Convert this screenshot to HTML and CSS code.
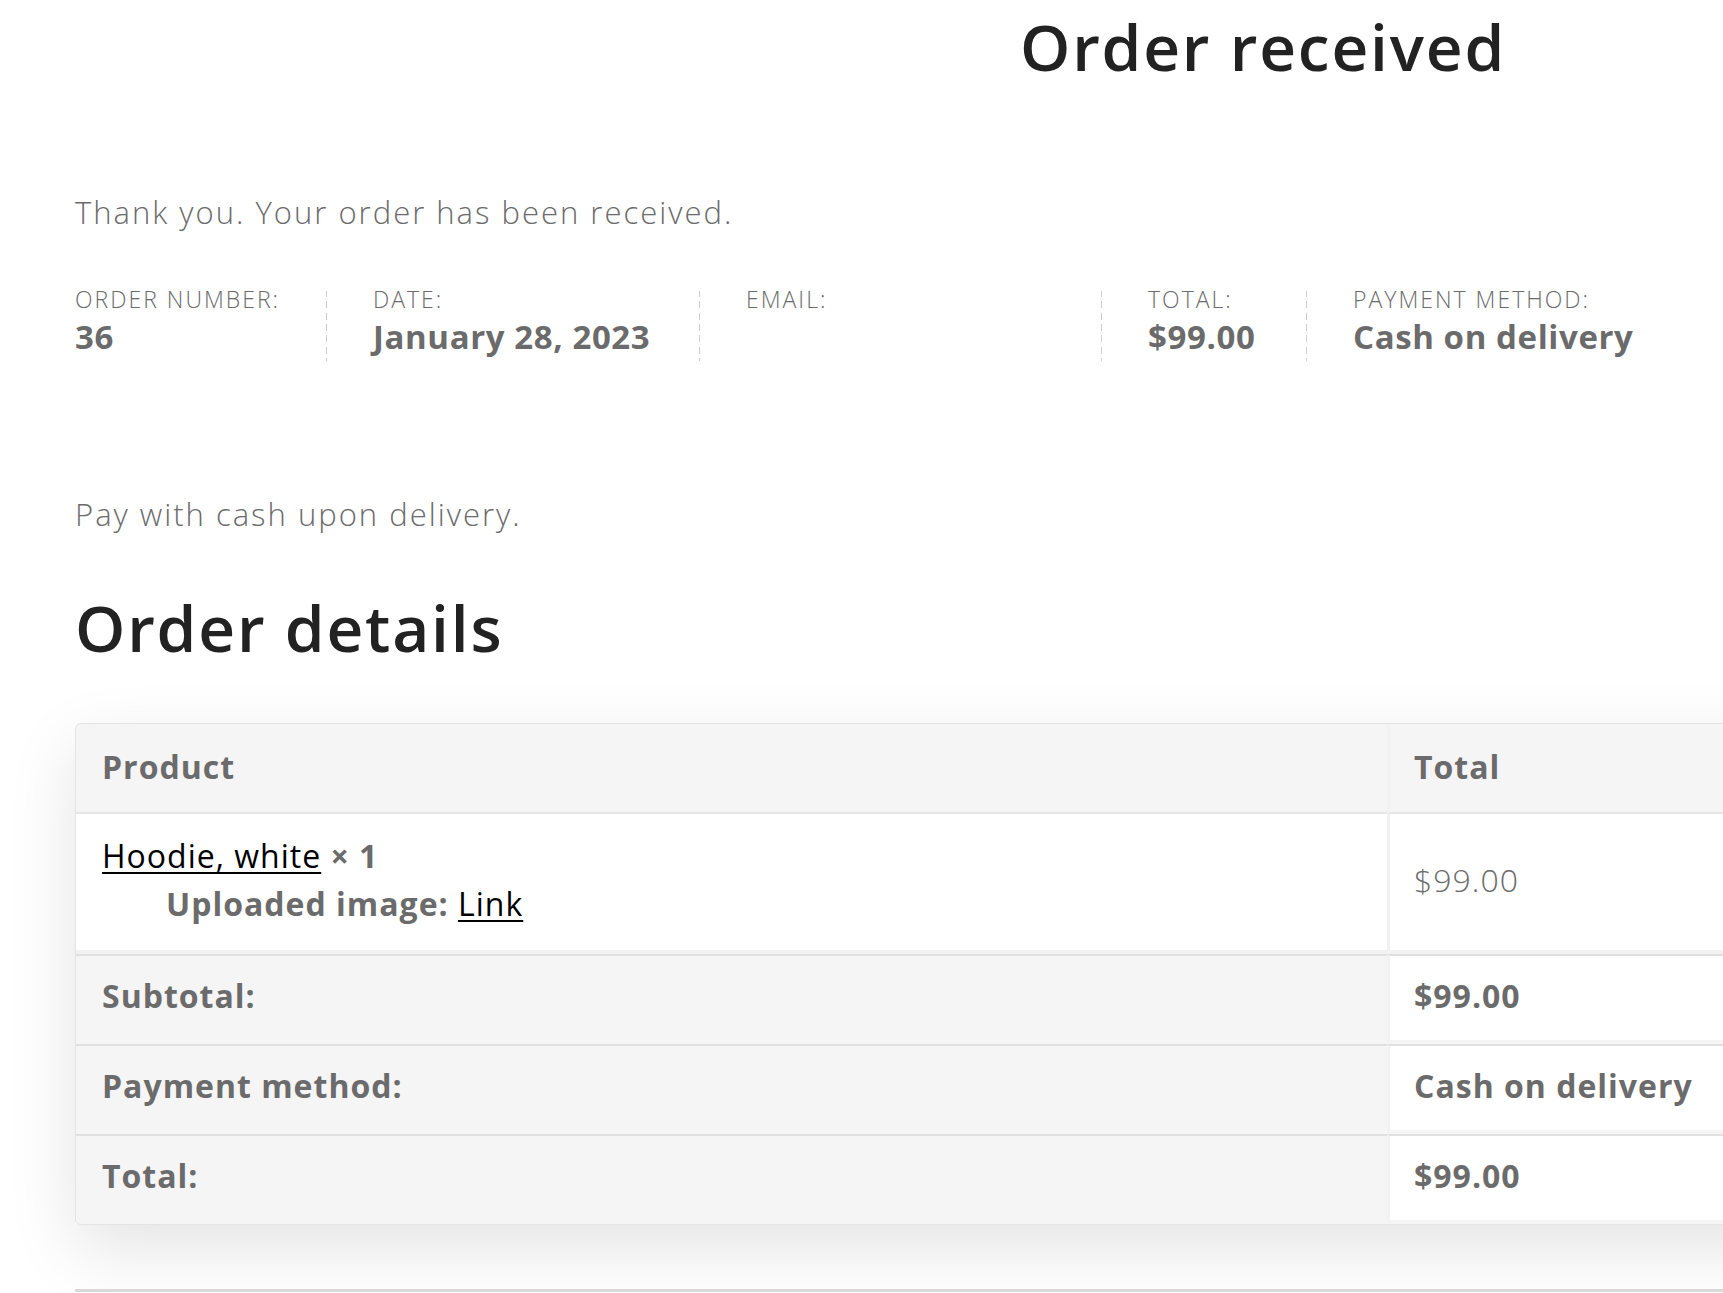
FILE: index.html
```html
<!DOCTYPE html>
<html lang="en">
<head>
<meta charset="utf-8">
<title>Order received</title>
<link rel="stylesheet" href="styles.css">
</head>
<body>
<div class="page">
  <header class="entry-header">
    <h1 class="entry-title">Order received</h1>
  </header>
  <div class="entry-content">
    <p class="thankyou">Thank you. Your order has been received.</p>
    <ul class="overview">
      <li class="ov ov-number">Order number:<strong>36</strong></li>
      <li class="ov ov-date">Date:<strong>January 28, 2023</strong></li>
      <li class="ov ov-email">Email:<strong>&nbsp;</strong></li>
      <li class="ov ov-total">Total:<strong>$99.00</strong></li>
      <li class="ov ov-method">Payment method:<strong>Cash on delivery</strong></li>
    </ul>
    <p class="instructions">Pay with cash upon delivery.</p>
    <section class="order-details">
      <h2 class="section-title">Order details</h2>
      <table class="order-table">
        <thead>
          <tr>
            <th class="col-product">Product</th>
            <th class="col-total">Total</th>
          </tr>
        </thead>
        <tbody>
          <tr>
            <td class="col-product">
              <a class="item-link" href="#">Hoodie, white</a> <strong class="qty">×&nbsp;1</strong>
              <ul class="item-meta">
                <li><strong>Uploaded image:</strong> <a class="item-link" href="#">Link</a></li>
              </ul>
            </td>
            <td class="col-total"><span class="amount">$99.00</span></td>
          </tr>
        </tbody>
        <tfoot>
          <tr>
            <th class="col-product">Subtotal:</th>
            <td class="col-total"><strong>$99.00</strong></td>
          </tr>
          <tr>
            <th class="col-product">Payment method:</th>
            <td class="col-total"><strong>Cash on delivery</strong></td>
          </tr>
          <tr>
            <th class="col-product">Total:</th>
            <td class="col-total"><strong>$99.00</strong></td>
          </tr>
        </tfoot>
      </table>
    </section>
    <section class="customer-details"></section>
  </div>
</div>
</body>
</html>
```

FILE: styles.css
```css
html, body {
  margin: 0;
  padding: 0;
  background: #fff;
  overflow: hidden;
}

body {
  font-family: "Open Sans", "Liberation Sans", sans-serif;
  color: #6b6b6b;
  font-size: 31px;
  line-height: 46px;
}

.page {
  width: 2376px;
  margin-left: 75px;
}

.entry-title {
  margin: 8px 0 0;
  font-size: 64px;
  line-height: 77px;
  font-weight: 600;
  letter-spacing: 1.8px;
  color: #222;
  text-align: center;
}

.thankyou {
  margin: 104px 0 0;
  font-weight: 300;
  letter-spacing: 2px;
}

.overview {
  display: flex;
  list-style: none;
  margin: 56px 0 0;
  padding: 0;
}

.ov {
  flex: none;
  box-sizing: content-box;
  font-size: 23px;
  line-height: 16px;
  font-weight: 300;
  letter-spacing: 2px;
  text-transform: uppercase;
  white-space: nowrap;
  padding: 0 46px 5px 0;
  margin-right: 46px;
  border-right: 1px solid #ccc;
  border-image: repeating-linear-gradient(to bottom, #cdcdcd 0 7px, transparent 7px 11px) 1;
}

.ov strong {
  display: block;
  margin-top: 11px;
  font-size: 33px;
  line-height: 38px;
  font-weight: 700;
  letter-spacing: 0.6px;
  text-transform: none;
}

.ov-number { width: 205px; }
.ov-date { width: 280px; }
.ov-email { width: 309px; }
.ov-total { width: 112px; }
.ov-method {
  border: 0;
  border-image: none;
  margin-right: 0;
  padding-right: 0;
}

.instructions {
  margin: 130px 0 0;
  font-weight: 300;
  letter-spacing: 2px;
}

.section-title {
  margin: 52px 0 0;
  font-size: 64px;
  line-height: 77px;
  font-weight: 600;
  letter-spacing: 1.8px;
  color: #222;
}

.order-table {
  margin-top: 57px;
  width: 100%;
  table-layout: fixed;
  border-collapse: separate;
  border-spacing: 0;
  background: #f5f5f5;
  border: 1px solid #e4e4e4;
  border-radius: 6px;
  box-shadow: 0 24px 70px rgba(0, 0, 0, 0.11);
  font-size: 32px;
  line-height: 48px;
  letter-spacing: 1px;
}

.order-table th,
.order-table td {
  box-sizing: border-box;
  text-align: left;
  vertical-align: middle;
  padding: 19px 26px 21px;
}

.order-table th {
  font-weight: 700;
  color: #6b6b6b;
}

.order-table th.col-product,
.order-table td.col-product {
  width: 1311px;
}

.order-table td.col-total,
.order-table th.col-total {
  border-left: 3px solid #f2f2f2;
  padding-left: 24px;
}

.order-table thead th {
  border-bottom: 2px solid #e6e6e6;
}

.order-table tbody td {
  background: #fff;
  border-bottom: 4px solid #f2f2f2;
  padding-top: 18px;
  padding-bottom: 22px;
}

.order-table tfoot th,
.order-table tfoot td {
  border-top: 2px solid #e0e0e0;
  padding-top: 16px;
  padding-bottom: 20px;
}

.order-table tfoot th {
  padding-bottom: 24px;
}

.order-table tfoot td {
  background: #fff;
  border-bottom: 4px solid #f5f5f5;
}

.order-table tfoot td strong {
  font-weight: 700;
}

.amount {
  font-weight: 300;
}

.item-link {
  color: #000;
  text-decoration: underline;
  text-decoration-thickness: 2px;
  text-underline-offset: 4px;
}

.qty {
  font-weight: 700;
}

.item-meta {
  list-style: none;
  margin: 0;
  padding: 0 0 0 64px;
}

.item-meta strong {
  font-weight: 700;
}

.customer-details {
  margin-top: 64px;
  border-top: 3px solid #d9d9d9;
  height: 40px;
}
```
